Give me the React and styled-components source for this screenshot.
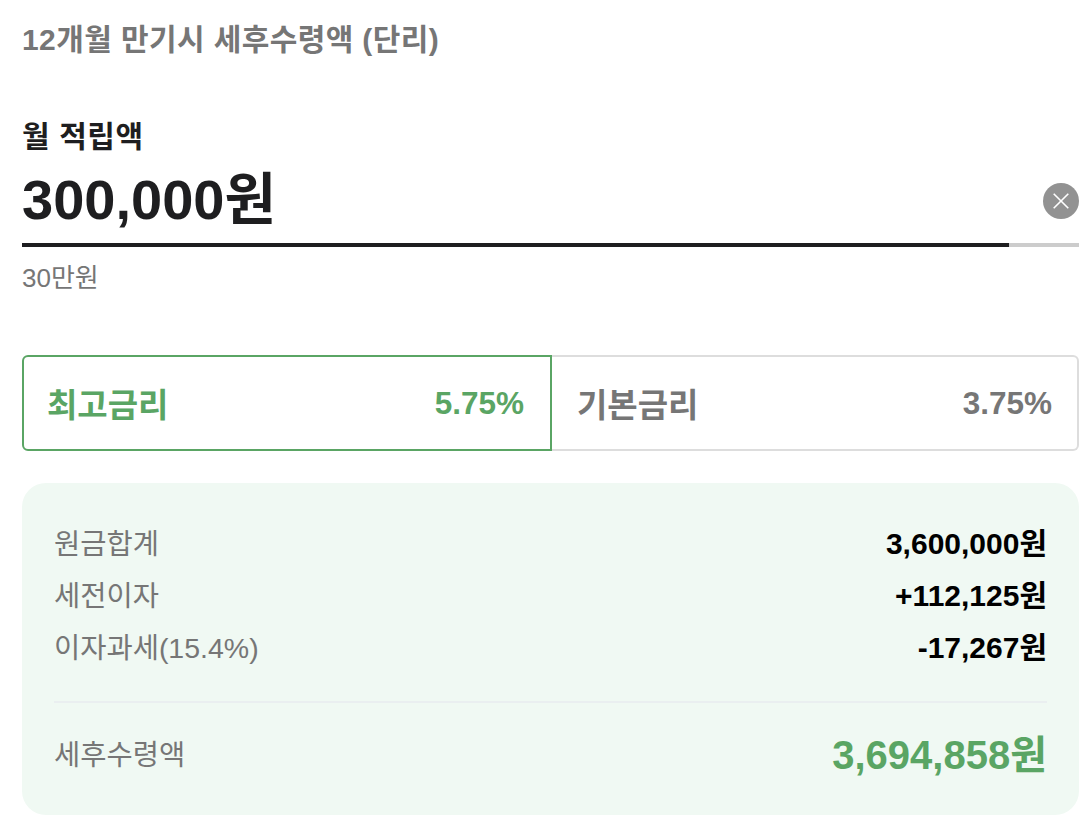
import React from "react";
import styled, { createGlobalStyle } from "styled-components";

const GlobalStyle = createGlobalStyle`
  html, body {
    margin: 0;
    padding: 0;
    background: #ffffff;
  }
  body {
    font-family: "Liberation Sans", "Noto Sans CJK KR", sans-serif;
  }
`;

const summaryRows = [
  { label: "원금합계", value: "3,600,000원" },
  { label: "세전이자", value: "+112,125원" },
  { label: "이자과세(15.4%)", value: "-17,267원" },
];

export default function App() {
  return (
    <Page>
      <GlobalStyle />
      <Title>12개월 만기시 세후수령액 (단리)</Title>
      <FieldLabel>월 적립액</FieldLabel>
      <AmountRow>
        <Amount>300,000원</Amount>
        <ClearButton>
          <svg width="16" height="16" viewBox="0 0 16 16">
            <path d="M0.7 0.7L15.3 15.3M15.3 0.7L0.7 15.3" stroke="#fff" strokeWidth="1.6" fill="none" />
          </svg>
        </ClearButton>
      </AmountRow>
      <Progress>
        <ProgressFill />
      </Progress>
      <Hint>30만원</Hint>
      <Tabs>
        <Tab $active>
          <span>최고금리</span>
          <TabRate>5.75%</TabRate>
        </Tab>
        <Tab>
          <span>기본금리</span>
          <TabRate>3.75%</TabRate>
        </Tab>
      </Tabs>
      <Summary>
        {summaryRows.map((row) => (
          <SummaryRow key={row.label}>
            <SummaryLabel>{row.label}</SummaryLabel>
            <SummaryValue>{row.value}</SummaryValue>
          </SummaryRow>
        ))}
        <Divider />
        <TotalRow>
          <SummaryLabel>세후수령액</SummaryLabel>
          <TotalValue>3,694,858원</TotalValue>
        </TotalRow>
      </Summary>
    </Page>
  );
}

const Page = styled.div`
  width: 1090px;
  height: 826px;
  box-sizing: border-box;
  padding: 22px 11px 0 22px;
  overflow: hidden;
  background: #fff;
`;

const Title = styled.div`
  font-size: 30px;
  line-height: 36px;
  font-weight: bold;
  letter-spacing: 0.4px;
  color: #767676;
`;

const FieldLabel = styled.div`
  margin-top: 61px;
  font-size: 30px;
  line-height: 36px;
  font-weight: bold;
  letter-spacing: 0.6px;
  color: #1e1e20;
`;

const AmountRow = styled.div`
  display: flex;
  align-items: center;
  justify-content: space-between;
  height: 66px;
  margin-top: 12px;
`;

const Amount = styled.div`
  font-size: 56px;
  line-height: 66px;
  font-weight: bold;
  color: #1e1e20;
`;

const ClearButton = styled.div`
  width: 36px;
  height: 36px;
  margin-top: 2px;
  border-radius: 50%;
  background: #929292;
  display: flex;
  align-items: center;
  justify-content: center;
`;

const Progress = styled.div`
  margin-top: 10px;
  height: 4px;
  background: #cccccc;
`;

const ProgressFill = styled.div`
  width: 987px;
  height: 100%;
  background: #1e1e20;
`;

const Hint = styled.div`
  margin-top: 15px;
  font-size: 26px;
  line-height: 32px;
  color: #767676;
`;

const Tabs = styled.div`
  display: flex;
  margin-top: 61px;
  height: 96px;
`;

const Tab = styled.div`
  flex: ${(p) => (p.$active ? "0 0 530px" : "1")};
  display: flex;
  align-items: center;
  justify-content: space-between;
  box-sizing: border-box;
  padding: ${(p) => (p.$active ? "0 26px 0 23px" : "0 25px 0 25px")};
  font-size: 33px;
  font-weight: bold;
  color: ${(p) => (p.$active ? "#5aa564" : "#767676")};
  border: 2px solid ${(p) => (p.$active ? "#5aa564" : "#dddddd")};
  border-radius: ${(p) => (p.$active ? "6px 0 0 6px" : "0 6px 6px 0")};
  border-left-width: ${(p) => (p.$active ? "2px" : "0")};
`;

const TabRate = styled.span`
  font-size: 31.5px;
`;

const Summary = styled.div`
  margin-top: 32px;
  box-sizing: border-box;
  height: 332px;
  padding: 32px 32px 0;
  border-radius: 24px;
  background: #f0f9f3;
`;

const SummaryRow = styled.div`
  display: flex;
  align-items: center;
  justify-content: space-between;
  height: 52px;
`;

const SummaryLabel = styled.div`
  font-size: 28.5px;
  color: #767676;
`;

const SummaryValue = styled.div`
  font-size: 30px;
  font-weight: bold;
  color: #000;
`;

const Divider = styled.div`
  margin-top: 30px;
  height: 2px;
  background: #eaeff0;
`;

const TotalRow = styled.div`
  display: flex;
  align-items: center;
  justify-content: space-between;
  margin-top: 19px;
  height: 60px;
`;

const TotalValue = styled.div`
  font-size: 40px;
  font-weight: bold;
  color: #5aa564;
`;
